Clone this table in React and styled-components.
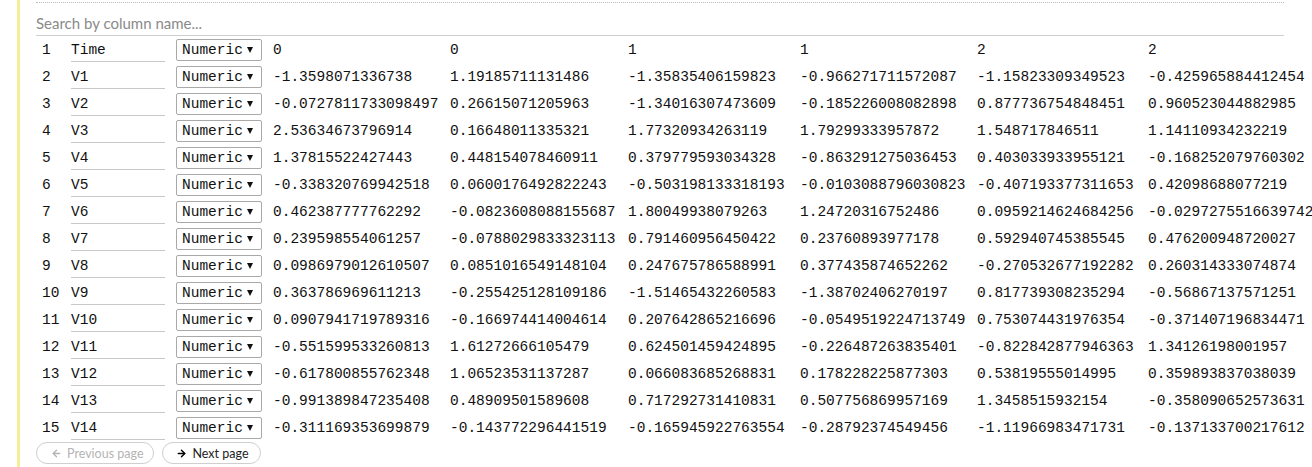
import React from 'react'
import styled, { createGlobalStyle } from 'styled-components'
import { ArrowLeft, ArrowRight } from 'lucide-react'

const GlobalStyle = createGlobalStyle`
  html, body {
    margin: 0;
    padding: 0;
    background: #fff;
    overflow: hidden;
  }
  body {
    font-family: Lato, "Open Sans", sans-serif;
  }
`

const Page = styled.div`
  display: flex;
  height: 467px;
  padding-left: 17px;
`
const Panel = styled.section`
  flex: 1;
  min-width: 0;
  border-left: 3px solid #f6ee96;
  padding: 2px 28px 0 16px;
`
const Toolbar = styled.div`
  border-top: 1px dotted #bdbdbd;
`
const Search = styled.input`
  display: block;
  width: 100%;
  height: 33px;
  box-sizing: border-box;
  padding: 8px 0 0;
  border: none;
  border-bottom: 1px solid #cfcfcf;
  outline: none;
  font-family: Lato, sans-serif;
  font-size: 15px;
  color: #333;
  background: transparent;

  &::placeholder {
    color: #8a8a8a;
  }
`
const Table = styled.div`
  font-family: "Liberation Mono", "DejaVu Sans Mono", monospace;
  font-size: 14.5px;
  color: #111;
`
const Row = styled.div`
  display: grid;
  grid-template-columns: 35px 105px 97px 177px 178px 172px 177px 171px max-content;
  height: 27px;
  white-space: nowrap;
`
const IndexCell = styled.div`
  display: flex;
  align-items: center;
  padding-left: 6px;
`
const NameCell = styled.div`
  padding-top: 2px;
`
const NameInput = styled.input`
  display: block;
  width: 94px;
  height: 24px;
  box-sizing: border-box;
  padding: 0;
  border: none;
  border-bottom: 1px solid #c8c8c8;
  outline: none;
  font: inherit;
  color: #111;
  background: transparent;
`
const SelectWrap = styled.div`
  position: relative;
  align-self: center;
  width: 86px;
  height: 22px;
`
const TypeSelect = styled.select`
  appearance: none;
  width: 100%;
  height: 100%;
  box-sizing: border-box;
  padding: 0 0 0 5px;
  border: 1px solid #a9a9a9;
  border-radius: 2px;
  background: #fff;
  font: inherit;
  color: #111;
  outline: none;
`
const Caret = styled.span`
  position: absolute;
  right: 9px;
  top: 8px;
  border-left: 3px solid transparent;
  border-right: 3px solid transparent;
  border-top: 6px solid #111;
  pointer-events: none;
`
const ValueCell = styled.div`
  display: flex;
  align-items: center;
`
const Pager = styled.div`
  display: flex;
  gap: 8px;
  padding-top: 1px;
`
const PageButton = styled.button`
  display: flex;
  align-items: center;
  gap: 5px;
  height: 22px;
  box-sizing: border-box;
  padding: 0 ${(p) => (p.$disabled ? '10px 0 14px' : '12px 0 13px')};
  border: 1px solid #cfcfcf;
  border-radius: 11px;
  background: #fff;
  font-family: Lato, sans-serif;
  font-size: 12.5px;
  color: ${(p) => (p.$disabled ? '#b4b4b4' : '#222')};
  cursor: ${(p) => (p.$disabled ? 'default' : 'pointer')};
`

const rows = [
  ['Time', '0', '0', '1', '1', '2', '2'],
  ['V1', '-1.3598071336738', '1.19185711131486', '-1.35835406159823', '-0.966271711572087', '-1.15823309349523', '-0.425965884412454'],
  ['V2', '-0.0727811733098497', '0.26615071205963', '-1.34016307473609', '-0.185226008082898', '0.877736754848451', '0.960523044882985'],
  ['V3', '2.53634673796914', '0.16648011335321', '1.77320934263119', '1.79299333957872', '1.548717846511', '1.14110934232219'],
  ['V4', '1.37815522427443', '0.448154078460911', '0.379779593034328', '-0.863291275036453', '0.403033933955121', '-0.168252079760302'],
  ['V5', '-0.338320769942518', '0.0600176492822243', '-0.503198133318193', '-0.0103088796030823', '-0.407193377311653', '0.42098688077219'],
  ['V6', '0.462387777762292', '-0.0823608088155687', '1.80049938079263', '1.24720316752486', '0.0959214624684256', '-0.0297275516639742'],
  ['V7', '0.239598554061257', '-0.0788029833323113', '0.791460956450422', '0.23760893977178', '0.592940745385545', '0.476200948720027'],
  ['V8', '0.0986979012610507', '0.0851016549148104', '0.247675786588991', '0.377435874652262', '-0.270532677192282', '0.260314333074874'],
  ['V9', '0.363786969611213', '-0.255425128109186', '-1.51465432260583', '-1.38702406270197', '0.817739308235294', '-0.56867137571251'],
  ['V10', '0.0907941719789316', '-0.166974414004614', '0.207642865216696', '-0.0549519224713749', '0.753074431976354', '-0.371407196834471'],
  ['V11', '-0.551599533260813', '1.61272666105479', '0.624501459424895', '-0.226487263835401', '-0.822842877946363', '1.34126198001957'],
  ['V12', '-0.617800855762348', '1.06523531137287', '0.066083685268831', '0.178228225877303', '0.53819555014995', '0.359893837038039'],
  ['V13', '-0.991389847235408', '0.48909501589608', '0.717292731410831', '0.507756869957169', '1.3458515932154', '-0.358090652573631'],
  ['V14', '-0.311169353699879', '-0.143772296441519', '-0.165945922763554', '-0.28792374549456', '-1.11966983471731', '-0.137133700217612'],
]

function ColumnRow({ index, name, values }) {
  return (
    <Row>
      <IndexCell>{index}</IndexCell>
      <NameCell>
        <NameInput defaultValue={name} />
      </NameCell>
      <SelectWrap>
        <TypeSelect defaultValue="numeric">
          <option value="numeric">Numeric</option>
          <option value="text">Text</option>
          <option value="date">Date</option>
        </TypeSelect>
        <Caret />
      </SelectWrap>
      {values.map((v, i) => (
        <ValueCell key={i}>{v}</ValueCell>
      ))}
    </Row>
  )
}

export default function App() {
  return (
    <>
      <GlobalStyle />
      <Page>
        <Panel>
          <Toolbar>
            <Search placeholder="Search by column name..." />
          </Toolbar>
          <Table>
            {rows.map(([name, ...values], i) => (
              <ColumnRow key={name} index={i + 1} name={name} values={values} />
            ))}
          </Table>
          <Pager>
            <PageButton $disabled disabled>
              <ArrowLeft size={11} strokeWidth={3} />
              Previous page
            </PageButton>
            <PageButton>
              <ArrowRight size={11} strokeWidth={3.2} color="#000" />
              Next page
            </PageButton>
          </Pager>
        </Panel>
      </Page>
    </>
  )
}
